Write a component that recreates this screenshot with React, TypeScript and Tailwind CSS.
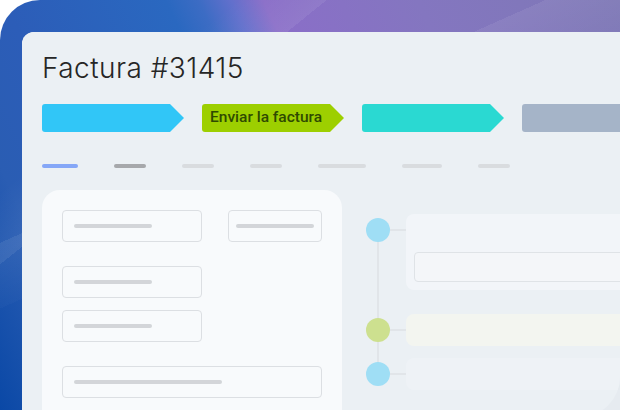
import React from "react";

const Input = ({ w, lineW, pl }: { w: string; lineW: string; pl: string }) => (
  <div className={`${w} h-8 shrink-0 rounded-[4px] border border-[#dcdfe3] flex items-center ${pl}`}>
    <div className={`${lineW} h-1 rounded-full bg-[#d3d5d9]`} />
  </div>
);

const Chevron = ({ color, children }: { color: string; children?: React.ReactNode }) => (
  <div
    className={`w-[142px] h-7 shrink-0 rounded-l-[3px] ${color} flex items-center pl-2 [clip-path:polygon(0_0,calc(100%_-_14px)_0,100%_50%,calc(100%_-_14px)_100%,0_100%)]`}
  >
    {children}
  </div>
);

export default function App() {
  return (
    <div className="w-[620px] h-[410px] overflow-hidden bg-white">
      <div className="w-full h-full rounded-tl-[40px] pl-[22px] pt-[32px] [background-image:linear-gradient(156deg,transparent_35.4%,rgba(255,255,255,0.07)_35.4%,rgba(255,255,255,0.02)_45%,transparent_45%),linear-gradient(321deg,transparent_71%,rgba(255,255,255,0.07)_71%,rgba(255,255,255,0)_79%),linear-gradient(65deg,#0a48a6_0%,#2a5db3_14%,#2c5db8_24%,#2a68c0_44%,#3c6cc4_48%,#6270cc_52%,#8a6ec8_56%,#8476c0_75%,#7e78b6_100%)]">
        <div className="w-[598px] h-[385px] rounded-tl-[12px] bg-[#e6ebf0] overflow-hidden">
          <div className="w-full h-full rounded-br-[40px] bg-[#ebf0f4] pl-5 pt-[22px] overflow-hidden">
            <div className="font-['Inter',sans-serif] font-light text-[28px] leading-[28px] tracking-[0.45px] text-[#262626]">
              Factura #31415
            </div>

            <div className="mt-[22px] flex gap-[18px]">
              <Chevron color="bg-[#31c6f7]" />
              <Chevron color="bg-[#9dcf00]">
                <span className="font-['Roboto',sans-serif] font-medium text-[15.5px] text-[#2f4a00] leading-none">
                  Enviar la factura
                </span>
              </Chevron>
              <Chevron color="bg-[#2ad9d2]" />
              <Chevron color="bg-[#a5b4c8]" />
            </div>

            <div className="mt-8 flex gap-9">
              <div className="w-9 h-1 rounded-full bg-[#85a7f7]" />
              <div className="w-8 h-1 rounded-full bg-[#a6a8ab]" />
              <div className="w-8 h-1 rounded-full bg-[#d9dcdf]" />
              <div className="w-8 h-1 rounded-full bg-[#d9dcdf]" />
              <div className="w-12 h-1 rounded-full bg-[#d9dcdf]" />
              <div className="w-10 h-1 rounded-full bg-[#d9dcdf]" />
              <div className="w-8 h-1 rounded-full bg-[#d9dcdf]" />
            </div>

            <div className="mt-[22px] flex">
              <div className="w-[300px] h-[240px] shrink-0 rounded-[18px] bg-[#f8fafc] p-5">
                <div className="flex gap-[26px]">
                  <Input w="w-[140px]" lineW="w-[78px]" pl="pl-[11px]" />
                  <Input w="w-[94px]" lineW="w-[78px]" pl="pl-[7px]" />
                </div>
                <div className="mt-6">
                  <Input w="w-[140px]" lineW="w-[78px]" pl="pl-[11px]" />
                </div>
                <div className="mt-3">
                  <Input w="w-[140px]" lineW="w-[78px]" pl="pl-[11px]" />
                </div>
                <div className="mt-6">
                  <Input w="w-[260px]" lineW="w-[148px]" pl="pl-[11px]" />
                </div>
              </div>

              <div className="relative ml-6 pt-6">
                <div className="absolute left-[11px] top-[40px] w-[2px] h-[144px] bg-[#e1e5e9]" />
                <div className="relative flex items-start">
                  <div className="mt-1 w-6 h-6 shrink-0 rounded-full bg-[#9fdef5]" />
                  <div className="mt-[15px] w-4 h-[2px] shrink-0 bg-[#e1e5e9]" />
                  <div className="w-[260px] h-[76px] shrink-0 rounded-lg bg-[#f2f5f9] pt-[38px] pl-2">
                    <div className="h-[30px] rounded-[4px] border border-[#dfe3e7] bg-[#f4f6f9]" />
                  </div>
                </div>
                <div className="relative mt-6 flex items-center">
                  <div className="w-6 h-6 shrink-0 rounded-full bg-[#cde08f]" />
                  <div className="w-4 h-[2px] shrink-0 bg-[#e1e5e9]" />
                  <div className="w-[260px] h-8 shrink-0 rounded-lg bg-[#f3f5f0]" />
                </div>
                <div className="relative mt-3 flex items-center">
                  <div className="w-6 h-6 shrink-0 rounded-full bg-[#9fdef5]" />
                  <div className="w-4 h-[2px] shrink-0 bg-[#e1e5e9]" />
                  <div className="w-[260px] h-8 shrink-0 rounded-lg bg-[#eef2f6]" />
                </div>
              </div>
            </div>
          </div>
        </div>
      </div>
    </div>
  );
}
